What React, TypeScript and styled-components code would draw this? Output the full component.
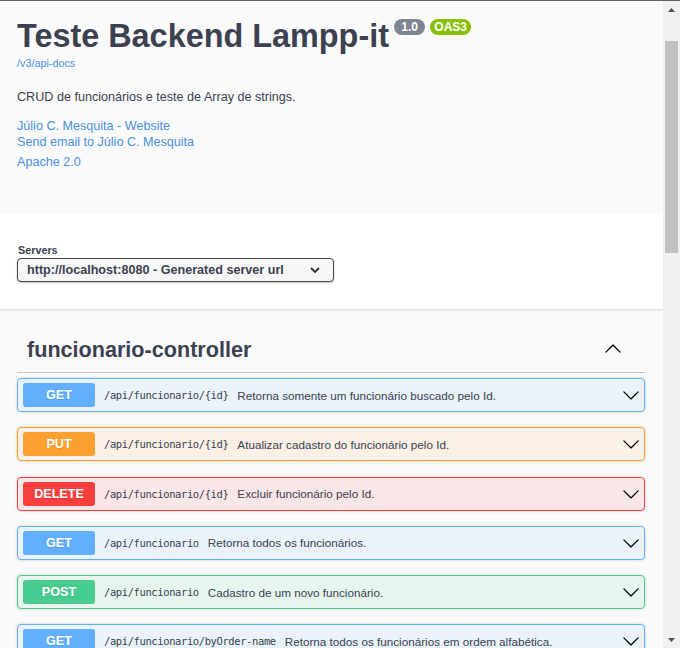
import React from "react";
import styled, { createGlobalStyle } from "styled-components";

const GlobalStyle = createGlobalStyle`
  html, body {
    margin: 0;
    padding: 0;
  }
  body {
    background: #fafafa;
    font-family: "Liberation Sans", Arial, sans-serif;
    color: #3b4151;
  }
`;

const Frame = styled.div`
  display: flex;
  flex-direction: column;
  width: 680px;
  height: 648px;
  box-sizing: border-box;
  border-top: 1px solid #606060;
  overflow: hidden;
`;

const Viewport = styled.div`
  display: flex;
  flex: 1;
  min-height: 0;
`;

const Page = styled.div`
  flex: 1;
  overflow: hidden;
  background: #fafafa;
`;

const Wrapper = styled.div`
  padding: 0 18px 0 17px;
`;

// --- scrollbar -------------------------------------------------------------

const ScrollTrack = styled.div`
  width: 17px;
  background: #f1f1f1;
  display: flex;
  flex-direction: column;
  align-items: center;
`;

const ScrollArrow = styled.div`
  width: 17px;
  height: 17px;
  display: flex;
  align-items: center;
  justify-content: center;
`;

const ScrollThumb = styled.div`
  width: 13px;
  height: 212px;
  margin-top: 23px;
  background: #c1c1c1;
`;

const ScrollSpacer = styled.div`
  flex: 1;
`;

function Scrollbar() {
    return <ScrollTrack>
        <ScrollArrow>
            <svg width="7" height="4" viewBox="0 0 7 4"><polygon points="0,4 3.5,0 7,4" fill="#505050" /></svg>
        </ScrollArrow>
        <ScrollThumb />
        <ScrollSpacer />
        <ScrollArrow>
            <svg width="7" height="4" viewBox="0 0 7 4"><polygon points="0,0 3.5,4 7,0" fill="#505050" /></svg>
        </ScrollArrow>
    </ScrollTrack>
}

// --- info ------------------------------------------------------------------

const Info = styled.div`
  padding: 17px 0 43px;
`;

const Title = styled.h2`
  margin: 0;
  display: flex;
  align-items: flex-start;
  font-size: 32.4px;
  line-height: 36px;
  font-weight: 700;
  color: #3b4151;
`;

const VersionBadge = styled.span<{ $bg: string }>`
  margin: 1px 0 0 5px;
  padding: 0 4px;
  height: 16px;
  line-height: 16px;
  border-radius: 57px;
  background: ${p => p.$bg};
  color: #fff;
  font-size: 12px;
  font-weight: 700;
  white-space: pre;
`;

const BaseUrl = styled.a`
  display: block;
  margin-top: 3px;
  font-size: 10.8px;
  line-height: 13px;
  color: #4990e2;
  text-decoration: none;
`;

const Description = styled.p`
  margin: 18px 0 11px;
  font-size: 12.6px;
  line-height: 19px;
  color: #3b4151;
`;

const InfoLink = styled.a<{ $gap?: number }>`
  display: block;
  margin-top: ${p => p.$gap || 0}px;
  font-size: 12.6px;
  line-height: 16px;
  color: #4990e2;
  text-decoration: none;
`;

// --- servers ---------------------------------------------------------------

const SchemeContainer = styled.section`
  background: #fff;
  box-shadow: 0 1px 2px 0 rgba(0, 0, 0, .15);
  padding: 31px 18px 27px 17px;
  margin-bottom: 18px;
`;

const ServersLabel = styled.span`
  display: block;
  margin: 0 0 1px 1px;
  font-size: 10.8px;
  line-height: 13px;
  font-weight: 700;
  color: #3b4151;
`;

const ServerSelect = styled.div`
  display: flex;
  align-items: center;
  justify-content: space-between;
  box-sizing: border-box;
  width: 317px;
  height: 24px;
  padding: 0 13px 0 9px;
  border: 1px solid #41444e;
  border-radius: 4px;
  background: #f7f7f7;
  box-shadow: 0 1px 2px 0 rgba(0, 0, 0, .25);
  font-size: 12.6px;
  font-weight: 700;
  color: #3b4151;
`;

// --- operations ------------------------------------------------------------

const TagHeading = styled.h3`
  margin: 0 0 5px;
  display: flex;
  align-items: center;
  justify-content: space-between;
  height: 45px;
  padding: 0 23px 0 10px;
  border-bottom: 1px solid rgba(59, 65, 81, .3);
  font-size: 21.6px;
  font-weight: 700;
  color: #3b4151;
`;

const TagArrow = styled.span`
  display: flex;
  margin-top: -2px;
`;

const OpBlock = styled.div<{ $color: string; $bg: string }>`
  display: flex;
  align-items: center;
  height: 34px;
  box-sizing: border-box;
  padding: 0 4px 0 5px;
  margin-bottom: 15.3px;
  border: 1px solid ${p => p.$color};
  border-radius: 4px;
  background: ${p => p.$bg};
  box-shadow: 0 0 3px rgba(0, 0, 0, .19);
`;

const Method = styled.span<{ $color: string }>`
  flex: none;
  width: 72px;
  height: 24px;
  line-height: 24px;
  border-radius: 3px;
  background: ${p => p.$color};
  color: #fff;
  text-align: center;
  font-size: 12.6px;
  font-weight: 700;
  text-shadow: 0 1px 0 rgba(0, 0, 0, .1);
`;

const Path = styled.span`
  flex: none;
  padding: 0 9px;
  font-family: "DejaVu Sans Mono", "Liberation Mono", monospace;
  font-size: 10.5px;
  letter-spacing: -0.4px;
  color: #3b4151;
`;

const OpDescription = styled.span`
  flex: 1;
  font-size: 11.7px;
  color: #3b4151;
  white-space: nowrap;
`;

const arrowPath = "M17.418 6.109c.272-.268.709-.268.979 0s.271.701 0 .969l-7.908 7.83c-.27.268-.707.268-.979 0l-7.908-7.83c-.27-.268-.27-.701 0-.969.271-.268.709-.268.979 0L10 13.25l7.418-7.141z";

function Arrow({ up }: { up?: boolean }) {
    return <svg width="18" height="18" viewBox="0 0 20 20" style={up ? { transform: "rotate(180deg)" } : undefined}>
        <path d={arrowPath} fill="#000" />
    </svg>
}

const methodColors: Record<string, [string, string]> = {
    GET: ["#61affe", "rgba(97, 175, 254, .1)"],
    PUT: ["#fca130", "rgba(252, 161, 48, .1)"],
    DELETE: ["#f93e3e", "rgba(249, 62, 62, .1)"],
    POST: ["#49cc90", "rgba(73, 204, 144, .1)"],
};

const operations = [
    { method: "GET", path: "/api/funcionario/{id}", summary: "Retorna somente um funcionário buscado pelo Id." },
    { method: "PUT", path: "/api/funcionario/{id}", summary: "Atualizar cadastro do funcionário pelo Id." },
    { method: "DELETE", path: "/api/funcionario/{id}", summary: "Excluir funcionário pelo Id." },
    { method: "GET", path: "/api/funcionario", summary: "Retorna todos os funcionários." },
    { method: "POST", path: "/api/funcionario", summary: "Cadastro de um novo funcionário." },
    { method: "GET", path: "/api/funcionario/byOrder-name", summary: "Retorna todos os funcionários em ordem alfabética." },
];

function Operation({ method, path, summary }: { method: string; path: string; summary: string }) {
    const [color, bg] = methodColors[method];
    return <OpBlock $color={color} $bg={bg}>
        <Method $color={color}>{method}</Method>
        <Path>{path}</Path>
        <OpDescription>{summary}</OpDescription>
        <Arrow />
    </OpBlock>
}

export default function App() {
    return <Frame>
        <GlobalStyle />
        <Viewport>
            <Page>
                <Wrapper>
                    <Info>
                        <Title>
                            Teste Backend Lampp-it
                            <VersionBadge $bg="#7d8492">{" 1.0 "}</VersionBadge>
                            <VersionBadge $bg="#89bf04">OAS3</VersionBadge>
                        </Title>
                        <BaseUrl>/v3/api-docs</BaseUrl>
                        <Description>CRUD de funcionários e teste de Array de strings.</Description>
                        <InfoLink>Júlio C. Mesquita - Website</InfoLink>
                        <InfoLink>Send email to Júlio C. Mesquita</InfoLink>
                        <InfoLink $gap={4}>Apache 2.0</InfoLink>
                    </Info>
                </Wrapper>

                <SchemeContainer>
                    <ServersLabel>Servers</ServersLabel>
                    <ServerSelect>
                        http://localhost:8080 - Generated server url
                        <svg width="10" height="6" viewBox="0 0 10 6">
                            <polyline points="1,1 5,5 9,1" fill="none" stroke="#2d2d2d" strokeWidth="1.8" />
                        </svg>
                    </ServerSelect>
                </SchemeContainer>

                <Wrapper>
                    <TagHeading>
                        funcionario-controller
                        <TagArrow><Arrow up /></TagArrow>
                    </TagHeading>
                    {operations.map((op, i) => <Operation key={i} {...op} />)}
                </Wrapper>
            </Page>
            <Scrollbar />
        </Viewport>
    </Frame>
}
